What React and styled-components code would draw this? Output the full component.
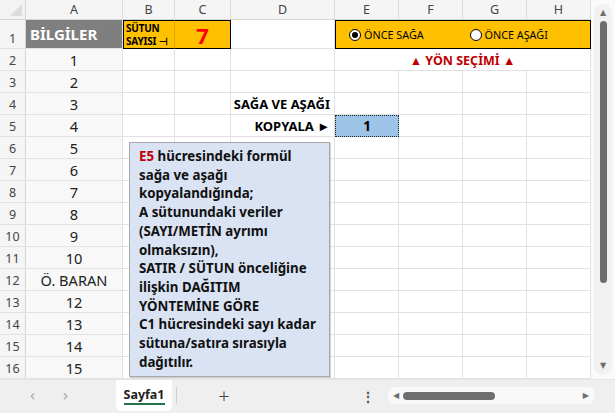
import React from "react";
import styled, { createGlobalStyle, css } from "styled-components";

const GlobalStyle = createGlobalStyle`
  html, body { margin: 0; padding: 0; background: #ffffff; }
  body { font-family: "Noto Sans", "Open Sans", sans-serif; overflow: hidden; }
  * { box-sizing: border-box; }
`;

const COLS = [26, 97, 52, 56, 104, 64, 64, 64, 64];
const LETTERS = ["A", "B", "C", "D", "E", "F", "G", "H"];
const COL_A = ["1", "2", "3", "4", "5", "6", "7", "8", "9", "10", "Ö. BARAN", "12", "13", "14", "15"];

const Window = styled.div`
  width: 615px;
  height: 413px;
  display: flex;
  flex-direction: column;
  background: #f0f0f0;
  position: relative;
  overflow: hidden;
`;

const Top = styled.div`
  display: flex;
  height: 379px;
  background: #ffffff;
`;

const Sheet = styled.div`
  display: grid;
  grid-template-columns: ${COLS.map((c) => c + "px").join(" ")};
  grid-template-rows: 20px 29px repeat(15, 22px);
  width: 591px;
  position: relative;
`;

const Corner = styled.div`
  background: #f3f3f3;
  border-right: 1px solid #d4d4d4;
  border-bottom: 1px solid #d4d4d4;
  position: relative;
  &::after {
    content: "";
    position: absolute;
    right: 3px;
    bottom: 3px;
    border-left: 12px solid transparent;
    border-bottom: 12px solid #dcdcdc;
  }
`;

const ColHead = styled.div`
  background: #f5f5f5;
  border-right: 1px solid #dcdcdc;
  border-bottom: 1px solid #d4d4d4;
  color: #444;
  font-size: 12.5px;
  display: flex;
  align-items: center;
  justify-content: center;
`;

const RowHead = styled.div`
  background: #f5f5f5;
  border-right: 1px solid #d4d4d4;
  border-bottom: 1px solid #e1e1e1;
  color: #444;
  font-size: 12.5px;
  display: flex;
  align-items: flex-end;
  justify-content: center;
  padding-bottom: 1px;
`;

const Cell = styled.div`
  grid-column: span ${({ $span }) => $span || 1};
  border-right: 1px solid #e1e1e1;
  border-bottom: 1px solid #e1e1e1;
  background: ${({ $bg }) => $bg || "#ffffff"};
  display: flex;
  align-items: flex-end;
  justify-content: ${({ $align }) => $align || "flex-start"};
  padding: 0 3px 1px;
  font-size: 12px;
  color: #000;
  white-space: nowrap;
  overflow: visible;
`;

const DataCell = styled(Cell)`
  background: #f8f8f8;
  font-size: 14.6px;
  color: #222;
  padding-bottom: 0;
`;

const TitleCell = styled(Cell)`
  background: #7f7f7f;
  color: #fff;
  font-weight: 700;
  font-size: 15px;
  align-items: center;
  padding: 0 0 0 4px;
`;

const Orange = styled(Cell)`
  background: #ffc000;
  border-top: 1px solid #000;
  border-bottom: 1px solid #000;
  ${({ $left }) => $left && css`border-left: 1px solid #000;`}
  ${({ $right }) => ($right ? css`border-right: 1px solid #000;` : css`border-right: 1px solid #e0a800;`)}
`;

const ColLabel = styled(Orange)`
  flex-direction: column;
  align-items: flex-start;
  justify-content: center;
  font-size: 10px;
  letter-spacing: -0.2px;
  font-weight: 700;
  line-height: 13px;
  padding: 0 2px;
`;

const BigNumber = styled(Orange)`
  color: #ff0000;
  font-weight: 700;
  font-size: 22px;
  justify-content: center;
  align-items: center;
  padding: 0;
`;

const RadioCell = styled(Orange)`
  align-items: center;
  padding: 0 0 0 13px;
`;

const RadioOption = styled.label`
  display: flex;
  align-items: center;
  gap: 3px;
  width: 126px;
  font-size: 10.8px;
  color: #000;
`;

const RadioDot = styled.span`
  width: 12px;
  height: 12px;
  border-radius: 50%;
  border: 1px solid #000;
  background: #fff;
  display: flex;
  align-items: center;
  justify-content: center;
  &::after {
    content: "";
    width: 6px;
    height: 6px;
    border-radius: 50%;
    background: ${({ $on }) => ($on ? "#000" : "transparent")};
  }
`;

const RedTitle = styled(Cell)`
  color: #c00000;
  font-weight: 700;
  font-size: 12.5px;
  justify-content: center;
`;

const BoldRight = styled(Cell)`
  justify-content: flex-end;
  font-weight: 700;
  font-size: 13px;
  padding-right: 4px;
`;

const ActiveCell = styled(Cell)`
  background: #9dc3e6;
  border: 1px dotted #222;
  justify-content: center;
  font-weight: 700;
  font-size: 13.5px;
`;

const NoteBox = styled.div`
  position: absolute;
  left: 129px;
  top: 142px;
  width: 201px;
  height: 235px;
  background: #dae3f3;
  border: 1px solid #a9a9a9;
  box-shadow: 1px 1px 0 #cfcfcf;
  padding: 4px 4px 0 9px;
  font-size: 13.3px;
  font-weight: 700;
  line-height: 18.7px;
  color: #111;
  white-space: nowrap;
`;

const Ref = styled.span`
  color: #c00000;
`;

const VScroll = styled.div`
  width: 24px;
  background: #fafafa;
  display: flex;
  justify-content: center;
  padding: 4px 0;
`;

const VTrack = styled.div`
  width: 18px;
  border-radius: 9px;
  background: #f1f1f1;
  display: flex;
  flex-direction: column;
  align-items: center;
  padding: 5px 0;
  gap: 4px;
`;

const VThumb = styled.div`
  width: 7px;
  height: 262px;
  border-radius: 4px;
  background: #6e6e6e;
`;

const Arrow = styled.span`
  color: #6e6e6e;
  font-size: 8px;
  line-height: 8px;
  font-family: "DejaVu Sans", sans-serif;
`;

const Spacer = styled.div`
  flex: 1;
`;

const TabBar = styled.div`
  flex: 1;
  display: flex;
  align-items: stretch;
  background: #efefef;
  border-top: 1px solid #e6e6e6;
`;

const NavBtn = styled.span`
  width: 33px;
  display: flex;
  align-items: center;
  justify-content: center;
  color: #a0a0a0;
  font-size: 15px;
  font-family: "DejaVu Sans", sans-serif;
  padding-bottom: 2px;
`;

const Nav = styled.div`
  display: flex;
  padding-left: 16px;
  width: 116px;
`;

const Tab = styled.div`
  width: 56px;
  background: #fff;
  border-radius: 0 0 5px 5px;
  display: flex;
  align-items: center;
  justify-content: center;
  margin-bottom: 2px;
`;

const TabLabel = styled.span`
  font-size: 12.5px;
  font-weight: 700;
  color: #222;
  border-bottom: 2px solid #217346;
  padding-bottom: 1px;
  line-height: 15px;
`;

const TabSep = styled.div`
  width: 1px;
  background: #d0d0d0;
  margin: 7px 0 9px 4px;
`;

const Plus = styled.span`
  width: 94px;
  display: flex;
  align-items: center;
  justify-content: center;
  font-size: 20px;
  font-weight: 300;
  color: #444;
  padding-bottom: 3px;
`;

const Dots = styled.span`
  width: 110px;
  display: flex;
  align-items: center;
  justify-content: flex-end;
  padding-right: 6px;
  font-size: 14px;
  font-weight: 700;
  color: #555;
`;

const HScroll = styled.div`
  width: 207px;
  height: 17px;
  margin: 7px 0 0 7px;
  border-radius: 8px;
  background: #f9f9f9;
  display: flex;
  align-items: center;
  padding: 0 6px 0 5px;
  gap: 4px;
`;

const HThumb = styled.div`
  width: 92px;
  height: 8px;
  border-radius: 4px;
  background: #6e6e6e;
`;

export default function App() {
  return (
    <Window>
      <GlobalStyle />
      <Top>
        <Sheet>
          <Corner />
          {LETTERS.map((l) => (
            <ColHead key={l}>{l}</ColHead>
          ))}

          <RowHead>1</RowHead>
          <TitleCell>BİLGİLER</TitleCell>
          <ColLabel $left>
            <span>SÜTUN</span>
            <span>SAYISI ⊣</span>
          </ColLabel>
          <BigNumber $right>7</BigNumber>
          <Cell />
          <RadioCell $span={4} $left $right>
            <RadioOption>
              <RadioDot $on />
              ÖNCE SAĞA
            </RadioOption>
            <RadioOption>
              <RadioDot />
              ÖNCE AŞAĞI
            </RadioOption>
          </RadioCell>

          {COL_A.map((v, i) => {
            const row = i + 2;
            let rest;
            if (row === 2) {
              rest = [
                <Cell key="b" />, <Cell key="c" />, <Cell key="d" />,
                <RedTitle key="e" $span={4}>▲ YÖN SEÇİMİ ▲</RedTitle>,
              ];
            } else if (row === 4) {
              rest = [
                <Cell key="b" />, <Cell key="c" />,
                <BoldRight key="d">SAĞA VE AŞAĞI</BoldRight>,
                <Cell key="e" />, <Cell key="f" />, <Cell key="g" />, <Cell key="h" />,
              ];
            } else if (row === 5) {
              rest = [
                <Cell key="b" />, <Cell key="c" />,
                <BoldRight key="d">KOPYALA ►</BoldRight>,
                <ActiveCell key="e">1</ActiveCell>,
                <Cell key="f" />, <Cell key="g" />, <Cell key="h" />,
              ];
            } else {
              rest = LETTERS.slice(1).map((l) => <Cell key={l} />);
            }
            return (
              <React.Fragment key={row}>
                <RowHead>{row}</RowHead>
                <DataCell $align="center">{v}</DataCell>
                {rest}
              </React.Fragment>
            );
          })}

          <NoteBox>
            <Ref>E5</Ref> hücresindeki formül<br />
            sağa ve aşağı<br />
            kopyalandığında;<br />
            A sütunundaki veriler<br />
            (SAYI/METİN ayrımı<br />
            olmaksızın),<br />
            SATIR / SÜTUN önceliğine<br />
            ilişkin DAĞITIM<br />
            YÖNTEMİNE GÖRE<br />
            C1 hücresindeki sayı kadar<br />
            sütuna/satıra sırasıyla<br />
            dağıtılır.
          </NoteBox>
        </Sheet>
        <VScroll>
          <VTrack>
            <Arrow>▲</Arrow>
            <VThumb />
            <Spacer />
            <Arrow>▼</Arrow>
          </VTrack>
        </VScroll>
      </Top>
      <TabBar>
        <Nav>
          <NavBtn>‹</NavBtn>
          <NavBtn>›</NavBtn>
        </Nav>
        <Tab>
          <TabLabel>Sayfa1</TabLabel>
        </Tab>
        <TabSep />
        <Plus>+</Plus>
        <Dots>⋮</Dots>
        <HScroll>
          <Arrow>◀</Arrow>
          <HThumb />
          <Spacer />
          <Arrow>▶</Arrow>
        </HScroll>
      </TabBar>
    </Window>
  );
}
